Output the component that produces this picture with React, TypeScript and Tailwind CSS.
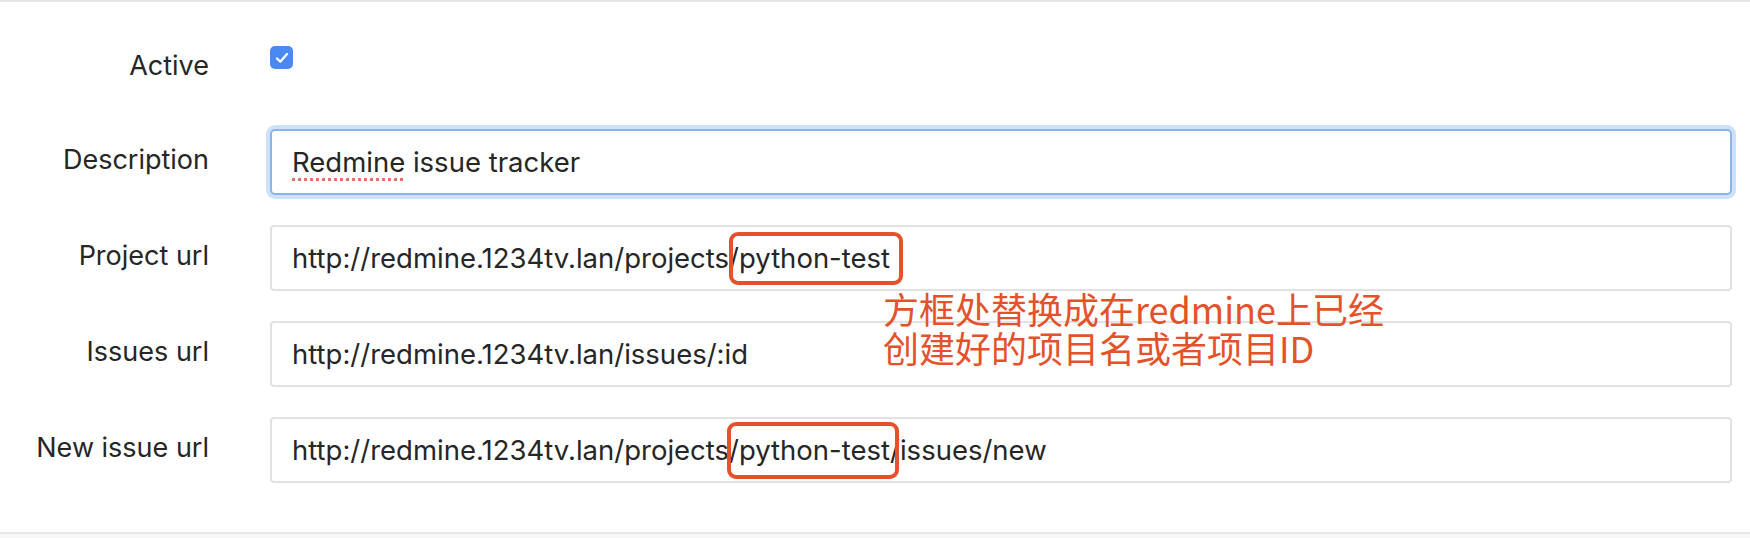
import React from "react";

const FONT = "font-['Inter','Noto_Sans',sans-serif]";

function Field({ label, children, focused }: { label: string; children: React.ReactNode; focused?: boolean }) {
  return (
    <div className="flex items-center">
      <div className="w-[209px] text-right text-[27px] leading-[36px] text-[#262626] -mt-[4px]">{label}</div>
      <div
        className={
          focused
            ? "ml-[61px] w-[1462px] h-[66px] flex items-center pl-[20px] rounded-[5px] border-2 border-[#8ab4ee] shadow-[0_0_0_4px_#cfe0f9] bg-white"
            : "ml-[61px] w-[1462px] h-[66px] flex items-center pl-[20px] rounded-[4px] border-2 border-[#e2e2e2] bg-white"
        }
      >
        <div className="text-[27.5px] leading-[36px] text-[#262626] whitespace-nowrap">{children}</div>
      </div>
    </div>
  );
}

export default function App() {
  return (
    <div className={`${FONT} relative w-[1750px] h-[538px] bg-white border-t-2 border-[#e6e6e6] flex flex-col`}>
      {/* Active row */}
      <div className="flex items-start pt-[44px]">
        <div className="w-[209px] text-right text-[27px] leading-[40px] text-[#262626]">Active</div>
        <div className="ml-[61px] w-[23px] h-[23px] rounded-[5px] bg-[#4b89f2] flex items-center justify-center">
          <svg width="16" height="16" viewBox="0 0 16 16" fill="none">
            <path d="M3 8.5 L6.3 11.8 L13 4" stroke="white" strokeWidth="2.3" strokeLinecap="round" strokeLinejoin="round" />
          </svg>
        </div>
      </div>

      <div className="mt-[43px] flex flex-col gap-[30px]">
        <Field label="Description" focused>
          <span className="underline decoration-dotted decoration-[#e8706a] decoration-[3px] underline-offset-[6px]">Redmine</span> issue tracker
        </Field>
        <Field label="Project url">
          http://redmine.1234tv.lan/projects/
          <span className="relative">
            python-test
            <span className="absolute -left-[10px] -right-[13px] -top-[9px] -bottom-[10px] border-[4px] border-[#e5512b] rounded-[9px]" />
          </span>
        </Field>
        <Field label="Issues url">http://redmine.1234tv.lan/issues/:id</Field>
        <Field label="New issue url">
          http://redmine.1234tv.lan/projects
          <span className="relative">
            /python-test/
            <span className="absolute -left-[2px] right-[1px] -top-[11px] -bottom-[12px] border-[4px] border-[#e5512b] rounded-[9px]" />
          </span>
          issues/new
        </Field>
      </div>

      <div className="absolute left-[883px] top-[287px] text-[36px] leading-[39px] text-[#e4522c] font-['Noto_Sans_CJK_SC',sans-serif]">
        <div>方框处替换成在redmine上已经</div>
        <div>创建好的项目名或者项目ID</div>
      </div>

      <div className="mt-auto h-[6px] border-t-2 border-[#e6e6e6] bg-[#f7f7f7]" />
    </div>
  );
}
